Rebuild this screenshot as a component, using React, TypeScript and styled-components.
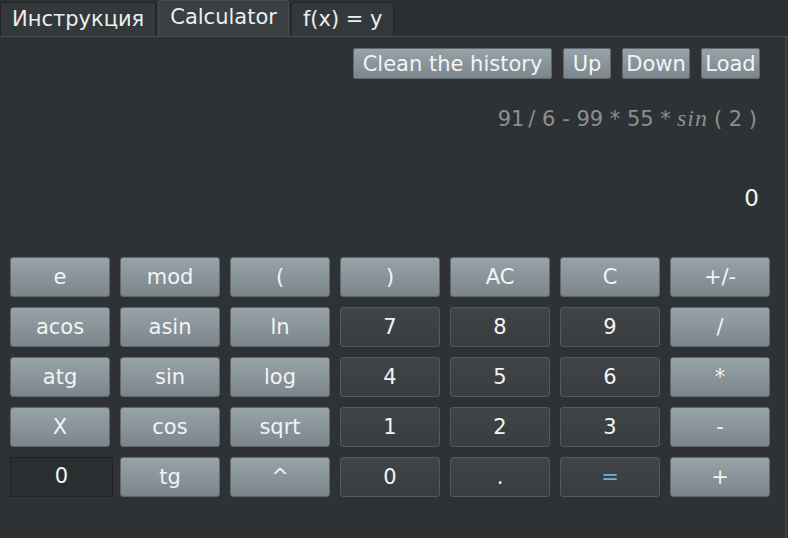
import styled, { createGlobalStyle, css } from 'styled-components';

const GlobalStyle = createGlobalStyle`
  html, body {
    margin: 0;
    padding: 0;
    background: #2e3235;
  }
  body {
    font-family: 'DejaVu Sans', 'Noto Sans', sans-serif;
    color: #eef0f1;
  }
`;

type Kind = 'light' | 'dark' | 'field';

type Key = {
  label: string;
  kind: Kind;
  accent?: boolean;
};

const L = (label: string): Key => ({ label, kind: 'light' });
const D = (label: string): Key => ({ label, kind: 'dark' });

const keys: Key[] = [
  L('e'), L('mod'), L('('), L(')'), L('AC'), L('C'), L('+/-'),
  L('acos'), L('asin'), L('ln'), D('7'), D('8'), D('9'), L('/'),
  L('atg'), L('sin'), L('log'), D('4'), D('5'), D('6'), L('*'),
  L('X'), L('cos'), L('sqrt'), D('1'), D('2'), D('3'), L('-'),
  { label: '0', kind: 'field' }, L('tg'), L('^'), D('0'), D('.'),
  { label: '=', kind: 'dark', accent: true }, L('+'),
];

const tabs = ['Инструкция', 'Calculator', 'f(x) = y'];

const tools = [
  { label: 'Clean the history', width: 199 },
  { label: 'Up', width: 48 },
  { label: 'Down', width: 68 },
  { label: 'Load', width: 59 },
];

export default function App() {
  return (
    <Window>
      <GlobalStyle />
      <TabBar>
        {tabs.map((t) => (
          <Tab key={t} $active={t === 'Calculator'}>
            {t}
          </Tab>
        ))}
      </TabBar>
      <Panel>
        <HistoryBar>
          {tools.map((b) => (
            <ToolButton key={b.label} $width={b.width}>
              {b.label}
            </ToolButton>
          ))}
        </HistoryBar>
        <Expression>
          91<Gap $w={4} />/ 6 - 99 * 55 *<Gap $w={6} />
          <MathFn>sin</MathFn>
          <Gap $w={6} />( 2 )
        </Expression>
        <Result>0</Result>
        <Keypad>
          {keys.map((k, i) =>
            k.kind === 'field' ? (
              <Field key={i}>{k.label}</Field>
            ) : (
              <KeyButton key={i} $kind={k.kind} $accent={k.accent}>
                {k.label}
              </KeyButton>
            )
          )}
        </Keypad>
      </Panel>
    </Window>
  );
}

const Window = styled.div`
  width: 788px;
  height: 538px;
  display: flex;
  flex-direction: column;
  overflow: hidden;
  background: #2e3235;
`;

const TabBar = styled.div`
  display: flex;
  align-items: flex-end;
  gap: 2px;
  height: 37px;
  border-bottom: 1px solid #474c4f;
  box-sizing: border-box;
  background: #2b2f32;
`;

const Tab = styled.div<{ $active?: boolean }>`
  height: 34px;
  padding: 0 11px 2px;
  display: flex;
  align-items: center;
  box-sizing: border-box;
  font-size: 21px;
  color: #eceeef;
  background: #33383b;
  border: 1px solid #23272a;
  border-bottom: none;
  border-radius: 3px 3px 0 0;
  ${({ $active }) =>
    $active &&
    css`
      height: 36px;
      padding-bottom: 4px;
      background: #3a3f42;
      border-color: #4a4f52;
    `}
`;

const Panel = styled.div`
  flex: 1;
  display: flex;
  flex-direction: column;
  border-right: 2px solid #3e4346;
  margin-right: 1px;
`;

const HistoryBar = styled.div`
  display: flex;
  justify-content: flex-end;
  gap: 11px;
  margin-top: 11px;
  padding-right: 25px;
`;

const lightFace = css`
  background: linear-gradient(#98a3a9, #7b858b);
  border: 1px solid #5f686d;
  color: #f2f4f5;
`;

const ToolButton = styled.div<{ $width: number }>`
  ${lightFace};
  width: ${({ $width }) => $width}px;
  height: 31px;
  box-sizing: border-box;
  display: flex;
  align-items: center;
  justify-content: center;
  font-size: 21px;
  white-space: nowrap;
  border-radius: 2px;
`;

const Expression = styled.div`
  display: flex;
  justify-content: flex-end;
  align-items: baseline;
  height: 28px;
  line-height: 28px;
  margin-top: 25px;
  padding-right: 28px;
  font-size: 21px;
  color: #8b8f91;
  white-space: pre;
`;

const Gap = styled.span<{ $w: number }>`
  display: inline-block;
  width: ${({ $w }) => $w}px;
`;

const MathFn = styled.span`
  font-family: 'Liberation Serif', 'DejaVu Serif', serif;
  font-style: italic;
  font-size: 24px;
  letter-spacing: 1px;
`;

const Result = styled.div`
  height: 28px;
  line-height: 28px;
  text-align: right;
  margin-top: 52px;
  padding-right: 26px;
  font-size: 23px;
  color: #f4f5f6;
`;

const Keypad = styled.div`
  display: grid;
  grid-template-columns: repeat(7, 100px);
  grid-auto-rows: 40px;
  gap: 10px;
  margin-top: 45px;
  padding-left: 10px;
`;

const KeyButton = styled.div<{ $kind: Kind; $accent?: boolean }>`
  display: flex;
  align-items: center;
  justify-content: center;
  box-sizing: border-box;
  border-radius: 3px;
  font-size: 21px;
  ${({ $kind }) =>
    $kind === 'light'
      ? lightFace
      : css`
          background: linear-gradient(#404447, #393d40);
          border: 1px solid #54595c;
          color: #f2f4f5;
        `}
  ${({ $accent }) =>
    $accent &&
    css`
      color: #6eaee0;
    `}
`;

const Field = styled.div`
  display: flex;
  justify-content: center;
  padding-top: 6px;
  box-sizing: border-box;
  margin-right: -3px;
  background: #2a2e30;
  border: 1px solid #1f2224;
  font-size: 21px;
  color: #f2f4f5;
`;
